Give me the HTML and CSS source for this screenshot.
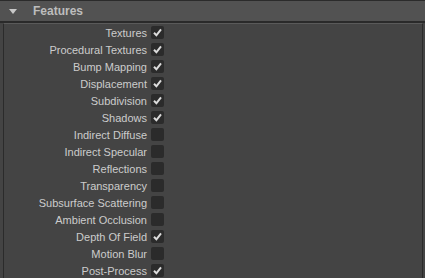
FILE: index.html
```html
<!DOCTYPE html>
<html lang="en">
<head>
    <meta charset="UTF-8">
    <meta name="viewport" content="width=device-width, initial-scale=1.0">
    <title>Features</title>
    <link rel="stylesheet" href="styles.css">
</head>
<body>
    <div class="frame">
        <div class="header">
            <span class="arrow"></span>
            <span class="title">Features</span>
        </div>

        <div class="body">
            <div class="row"><span class="label">Textures</span><span class="box on"><svg viewBox="0 0 13 13"><path d="M3 6.8 L5.4 9.3 L10 3.4"/></svg></span></div>
            <div class="row"><span class="label">Procedural Textures</span><span class="box on"><svg viewBox="0 0 13 13"><path d="M3 6.8 L5.4 9.3 L10 3.4"/></svg></span></div>
            <div class="row"><span class="label">Bump Mapping</span><span class="box on"><svg viewBox="0 0 13 13"><path d="M3 6.8 L5.4 9.3 L10 3.4"/></svg></span></div>
            <div class="row"><span class="label">Displacement</span><span class="box on"><svg viewBox="0 0 13 13"><path d="M3 6.8 L5.4 9.3 L10 3.4"/></svg></span></div>
            <div class="row"><span class="label">Subdivision</span><span class="box on"><svg viewBox="0 0 13 13"><path d="M3 6.8 L5.4 9.3 L10 3.4"/></svg></span></div>
            <div class="row"><span class="label">Shadows</span><span class="box on"><svg viewBox="0 0 13 13"><path d="M3 6.8 L5.4 9.3 L10 3.4"/></svg></span></div>
            <div class="row"><span class="label">Indirect Diffuse</span><span class="box"></span></div>
            <div class="row"><span class="label">Indirect Specular</span><span class="box"></span></div>
            <div class="row"><span class="label">Reflections</span><span class="box"></span></div>
            <div class="row"><span class="label">Transparency</span><span class="box"></span></div>
            <div class="row"><span class="label">Subsurface Scattering</span><span class="box"></span></div>
            <div class="row"><span class="label">Ambient Occlusion</span><span class="box"></span></div>
            <div class="row"><span class="label">Depth Of Field</span><span class="box on"><svg viewBox="0 0 13 13"><path d="M3 6.8 L5.4 9.3 L10 3.4"/></svg></span></div>
            <div class="row"><span class="label">Motion Blur</span><span class="box"></span></div>
            <div class="row"><span class="label">Post-Process</span><span class="box on"><svg viewBox="0 0 13 13"><path d="M3 6.8 L5.4 9.3 L10 3.4"/></svg></span></div>
        </div>
    </div>
</body>
</html>
```

FILE: styles.css
```css
body {
    margin: 0;
    background-color: #444444;
    font-family: "Liberation Sans", Arial, sans-serif;
    font-size: 11px;
    color: #cccccc;
    height: 278px;
    overflow: hidden;
}

.frame {
    border-top: 1px solid #2b2b2b;
}

.header {
    display: flex;
    align-items: center;
    height: 20px;
    background-color: #525252;
    border-bottom: 2px solid #2a2a2a;
}

.arrow {
    width: 0;
    height: 0;
    margin-left: 9px;
    margin-right: 16px;
    border-left: 4px solid transparent;
    border-right: 4px solid transparent;
    border-top: 5px solid #c8c8c8;
}

.title {
    font-weight: bold;
    font-size: 12px;
    color: #bdbdbd;
}

.body {
    margin: 0 2px 0 3px;
    height: 260px;
    border-left: 1px solid #2b2b2b;
    border-right: 1px solid #2b2b2b;
    border-top: 1px solid #5a5a5a;
}

.row {
    display: grid;
    grid-template-columns: 143px 13px;
    column-gap: 4px;
    align-items: center;
    height: 17px;
}

.label {
    text-align: right;
    white-space: nowrap;
}

.box {
    width: 13px;
    height: 13px;
    background-color: #2b2b2b;
    border-radius: 2px;
}

.box svg {
    display: block;
    width: 13px;
    height: 13px;
}

.box path {
    fill: none;
    stroke: #dcdcdc;
    stroke-width: 2;
}
```
